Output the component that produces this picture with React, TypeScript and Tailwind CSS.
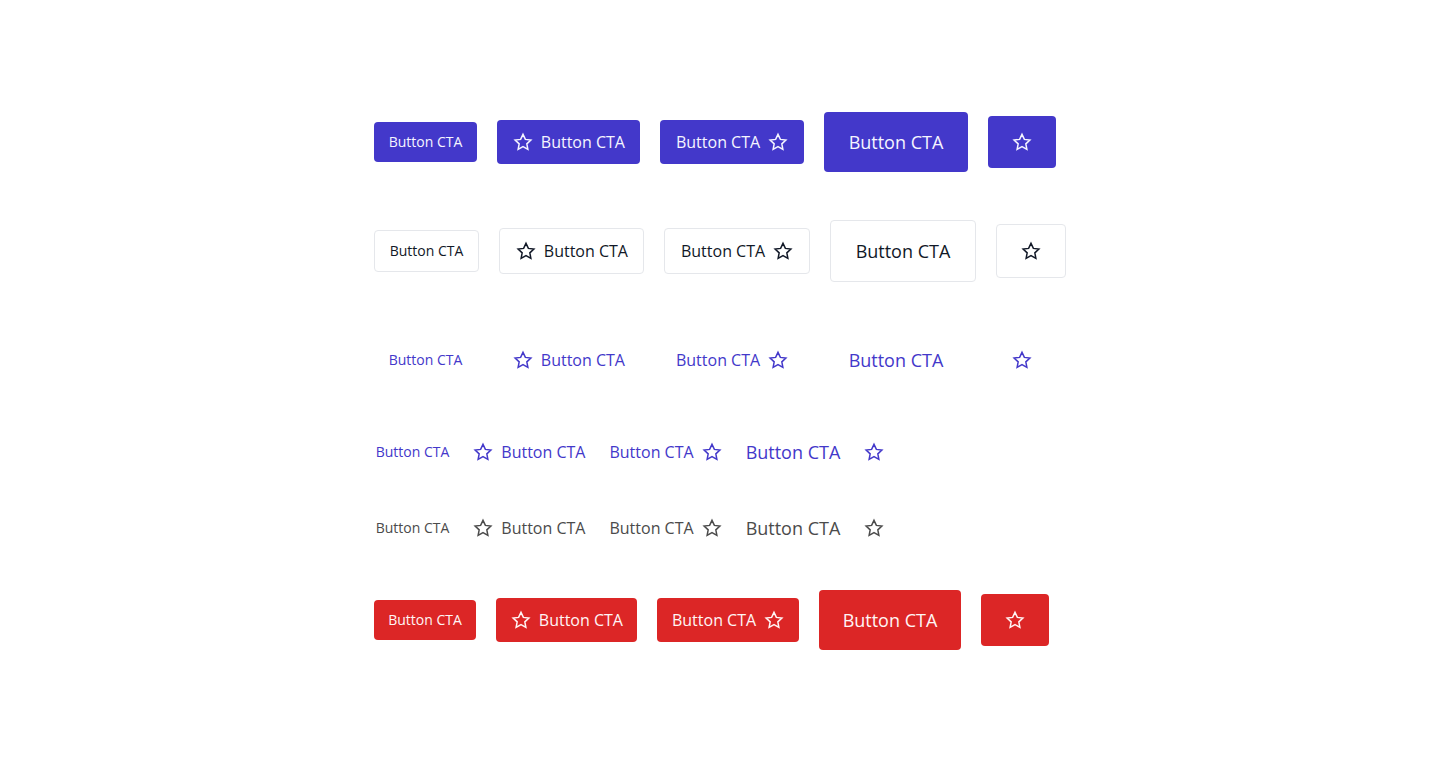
import React from "react";

type Variant = "primary" | "outline" | "ghost" | "link" | "plain" | "danger";
type Size = "sm" | "md" | "lg" | "icon";

const variants: Record<Variant, string> = {
  primary: "bg-[#4338ca] text-[#f5f5ff] rounded",
  outline: "bg-white text-[#111827] border border-[#e5e7eb] rounded",
  ghost: "bg-transparent text-[#4338ca] rounded",
  link: "bg-transparent text-[#4338ca]",
  plain: "bg-transparent text-[#4b4b4b]",
  danger: "bg-[#dc2626] text-[#fff5f5] rounded",
};

const sizes: Record<Size, string> = {
  sm: "px-[15px] py-2.5 text-sm leading-5",
  md: "px-[15.5px] py-2.5 text-base leading-6 gap-2",
  lg: "px-[25px] py-4 text-lg leading-7",
  icon: "px-6 py-4",
};

const dangerSizes: Record<Size, string> = {
  sm: "px-[14.5px] py-2.5 text-sm leading-5",
  md: "px-[14.5px] py-2.5 text-base leading-6 gap-2",
  lg: "px-6 py-4 text-lg leading-7",
  icon: "px-6 py-4",
};

const linkSizes: Record<Size, string> = {
  sm: "px-0.5 text-sm leading-5",
  md: "px-0.5 text-base leading-6 gap-2",
  lg: "px-0.5 text-lg leading-7",
  icon: "px-0.5",
};

function Star() {
  return (
    <svg
      width="20"
      height="20"
      viewBox="0 0 24 24"
      fill="none"
      stroke="currentColor"
      strokeWidth="1.8"
      strokeLinejoin="miter"
      className="shrink-0"
    >
      <path d="M12 2.8l2.85 6.05 6.6.8-4.85 4.55 1.25 6.55L12 17.55l-5.85 3.2 1.25-6.55-4.85-4.55 6.6-.8z" />
    </svg>
  );
}

function Btn({ variant, size, icon }: { variant: Variant; size: Size; icon?: "left" | "right" }) {
  const s =
    variant === "link" || variant === "plain"
      ? linkSizes[size]
      : variant === "danger"
        ? dangerSizes[size]
        : sizes[size];
  return (
    <button className={`flex items-center ${variants[variant]} ${s}`}>
      {icon === "left" && <Star />}
      {size !== "icon" && <span>Button CTA</span>}
      {icon === "right" && <Star />}
      {size === "icon" && <Star />}
    </button>
  );
}

function Row({ variant }: { variant: Variant }) {
  return (
    <div className="flex items-center gap-5">
      <Btn variant={variant} size="sm" />
      <Btn variant={variant} size="md" icon="left" />
      <Btn variant={variant} size="md" icon="right" />
      <Btn variant={variant} size="lg" />
      <Btn variant={variant} size="icon" />
    </div>
  );
}

export default function App() {
  const rows: Variant[] = ["primary", "outline", "ghost", "link", "plain", "danger"];
  return (
    <div
      className="min-h-screen w-full bg-white flex justify-center pt-[112px]"
      style={{ fontFamily: '"Open Sans", "Noto Sans", sans-serif' }}
    >
      <div className="flex flex-col items-start gap-12">
        {rows.map((v) => (
          <Row key={v} variant={v} />
        ))}
      </div>
    </div>
  );
}
